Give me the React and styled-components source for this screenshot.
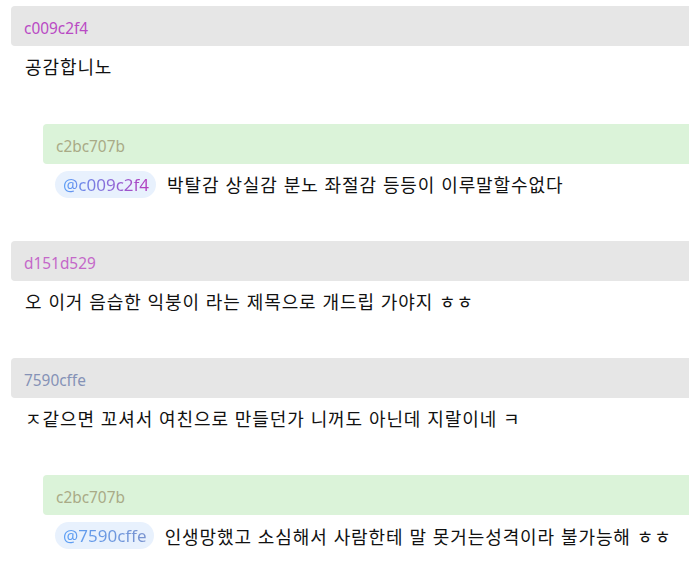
import React from "react";
import styled, { createGlobalStyle } from "styled-components";

const comments = [
  {
    id: "c009c2f4",
    color: "#b94ac4",
    text: "공감합니노",
    replies: [
      {
        id: "c2bc707b",
        color: "#a9aa86",
        mention: { id: "c009c2f4", color: "#b53cbd" },
        text: "박탈감 상실감 분노 좌절감 등등이 이루말할수없다",
      },
    ],
  },
  {
    id: "d151d529",
    color: "#c468c9",
    text: "오 이거 음습한 익붕이 라는 제목으로 개드립 가야지 ㅎㅎ",
    replies: [],
  },
  {
    id: "7590cffe",
    color: "#8592b6",
    text: "ㅈ같으면 꼬셔서 여친으로 만들던가 니꺼도 아닌데 지랄이네 ㅋ",
    replies: [
      {
        id: "c2bc707b",
        color: "#a9aa86",
        mention: { id: "7590cffe", color: "#7a93cf" },
        text: "인생망했고 소심해서 사람한테 말 못거는성격이라 불가능해 ㅎㅎ",
      },
    ],
  },
];

function App() {
  return (
    <>
      <GlobalStyle />
      <List>
        {comments.map((c, i) => (
          <React.Fragment key={i}>
            <Comment>
              <Header>
                <Author $color={c.color}>{c.id}</Author>
              </Header>
              <Body>{c.text}</Body>
            </Comment>
            {c.replies.map((r, j) => (
              <Comment key={j} $reply>
                <Header $reply>
                  <Author $color={r.color}>{r.id}</Author>
                </Header>
                <Body $reply>
                  <Mention>
                    <MentionText $to={r.mention.color}>@{r.mention.id}</MentionText>
                  </Mention>
                  <span>{r.text}</span>
                </Body>
              </Comment>
            ))}
          </React.Fragment>
        ))}
      </List>
    </>
  );
}

export default App;

const GlobalStyle = createGlobalStyle`
  body {
    margin: 0;
    background: #fff;
    overflow: hidden;
    font-family: "Noto Sans", "Noto Sans CJK KR", sans-serif;
  }
`;

const List = styled.div`
  padding: 6.25px 0 0 11px;
  width: 700px;
`;

const Comment = styled.div`
  margin-left: ${(p) => (p.$reply ? "32px" : "0")};
`;

const Header = styled.div`
  height: 40px;
  box-sizing: border-box;
  display: flex;
  align-items: center;
  padding: 5px 0 0 13px;
  border-radius: 4px 0 0 4px;
  background: ${(p) => (p.$reply ? "#dbf3d9" : "#e6e6e6")};
`;

const Author = styled.span`
  font-size: 15.4px;
  color: ${(p) => p.$color};
`;

const Body = styled.div`
  display: flex;
  align-items: center;
  gap: 11px;
  height: 77.25px;
  box-sizing: border-box;
  padding: ${(p) => (p.$reply ? "7px 12px 43px" : "7px 14px 44px")};
  font-family: "Noto Sans CJK KR", sans-serif;
  font-size: 18px;
  letter-spacing: 0.9px;
  word-spacing: 1px;
  line-height: 26px;
  color: #111;
  white-space: nowrap;
`;

const Mention = styled.span`
  display: inline-flex;
  align-items: center;
  padding: 0 7px 0 8px;
  height: 27px;
  border-radius: 14px;
  background: #e8f1fd;
  letter-spacing: 0;
`;

const MentionText = styled.span`
  font-family: "Noto Sans", sans-serif;
  font-size: 17px;
  line-height: 27px;
  background-image: linear-gradient(90deg, #5a9ef6, ${(p) => p.$to});
  -webkit-background-clip: text;
  background-clip: text;
  -webkit-text-fill-color: transparent;
`;
